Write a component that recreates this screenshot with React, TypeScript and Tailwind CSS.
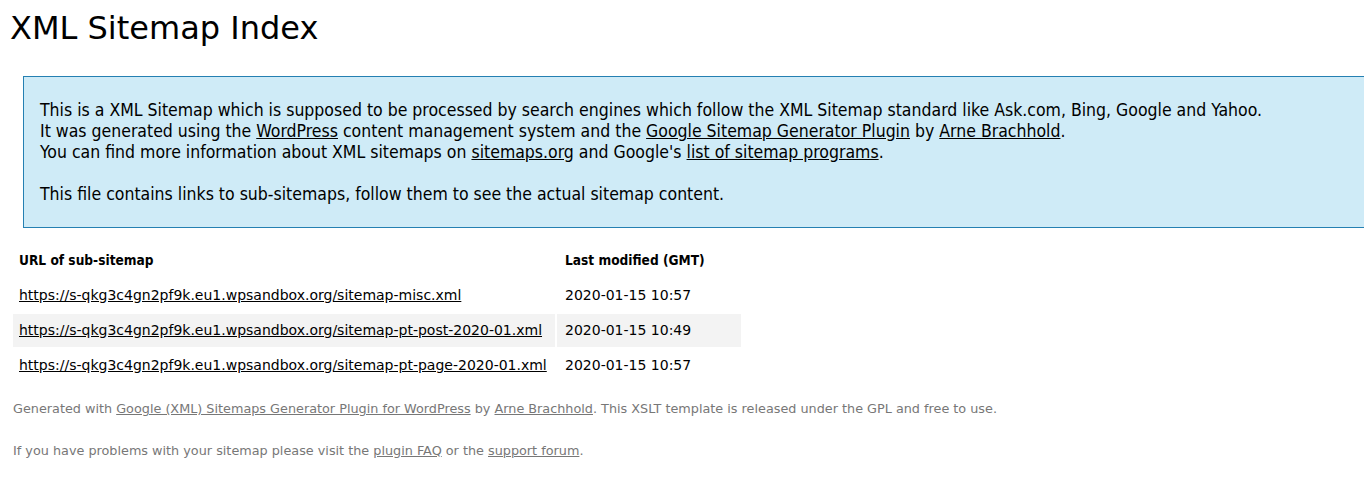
const rows = [
  { url: "https://s-qkg3c4gn2pf9k.eu1.wpsandbox.org/sitemap-misc.xml", date: "2020-01-15 10:57" },
  { url: "https://s-qkg3c4gn2pf9k.eu1.wpsandbox.org/sitemap-pt-post-2020-01.xml", date: "2020-01-15 10:49" },
  { url: "https://s-qkg3c4gn2pf9k.eu1.wpsandbox.org/sitemap-pt-page-2020-01.xml", date: "2020-01-15 10:57" },
];

export default function App() {
  return (
    <div className="w-full min-h-[493px] overflow-hidden bg-white text-black font-['DejaVu_Sans',sans-serif]">
      <h1 className="pl-[10px] pt-[10px] text-[32px] leading-[37px] font-normal">XML Sitemap Index</h1>

      <div className="ml-[23px] mt-[29px] w-[1360px] border border-[#2580B2] bg-[#CFEBF7] px-[16px] pt-[23px] pb-[22px] text-[17.5px] leading-[21px] font-['DejaVu_Sans_Condensed','DejaVu_Sans',sans-serif]">
        <p>
          This is a XML Sitemap which is supposed to be processed by search engines which follow the XML Sitemap
          standard like Ask.com, Bing, Google and Yahoo.
          <br />
          It was generated using the <a href="#" className="underline">WordPress</a> content management system and
          the <a href="#" className="underline">Google Sitemap Generator Plugin</a> by{" "}
          <a href="#" className="underline">Arne Brachhold</a>.
          <br />
          You can find more information about XML sitemaps on{" "}
          <a href="#" className="underline">sitemaps.org</a> and Google's{" "}
          <a href="#" className="underline">list of sitemap programs</a>.
        </p>
        <p className="mt-[21px]">
          This file contains links to sub-sitemaps, follow them to see the actual sitemap content.
        </p>
      </div>

      <div className="ml-[13px] mt-[16px] flex flex-col gap-[2px] text-[14px]">
        <div className="flex gap-[2px] h-[33px] items-center font-bold text-[13.6px] font-['DejaVu_Sans_Condensed','DejaVu_Sans',sans-serif]">
          <div className="w-[542px] pl-[6px]">URL of sub-sitemap</div>
          <div className="w-[184px] pl-[8px]">Last modified (GMT)</div>
        </div>
        {rows.map((r, i) => (
          <div key={r.url} className="flex gap-[2px] h-[33px]">
            <div className={`w-[542px] pl-[6px] pb-[1px] flex items-center ${i % 2 === 1 ? "bg-[#f3f3f3]" : ""}`}>
              <a href="#" className="underline">{r.url}</a>
            </div>
            <div className={`w-[184px] pl-[8px] pb-[1px] flex items-center ${i % 2 === 1 ? "bg-[#f3f3f3]" : ""}`}>
              {r.date}
            </div>
          </div>
        ))}
      </div>

      <div className="ml-[13px] mt-[17px] text-[12.8px] leading-[20px] text-[#777777]">
        <p>
          Generated with <a href="#" className="underline">Google (XML) Sitemaps Generator Plugin for WordPress</a> by{" "}
          <a href="#" className="underline">Arne Brachhold</a>. This XSLT template is released under the GPL and free
          to use.
        </p>
        <p className="mt-[22px]">
          If you have problems with your sitemap please visit the <a href="#" className="underline">plugin FAQ</a> or
          the <a href="#" className="underline">support forum</a>.
        </p>
      </div>
    </div>
  );
}
